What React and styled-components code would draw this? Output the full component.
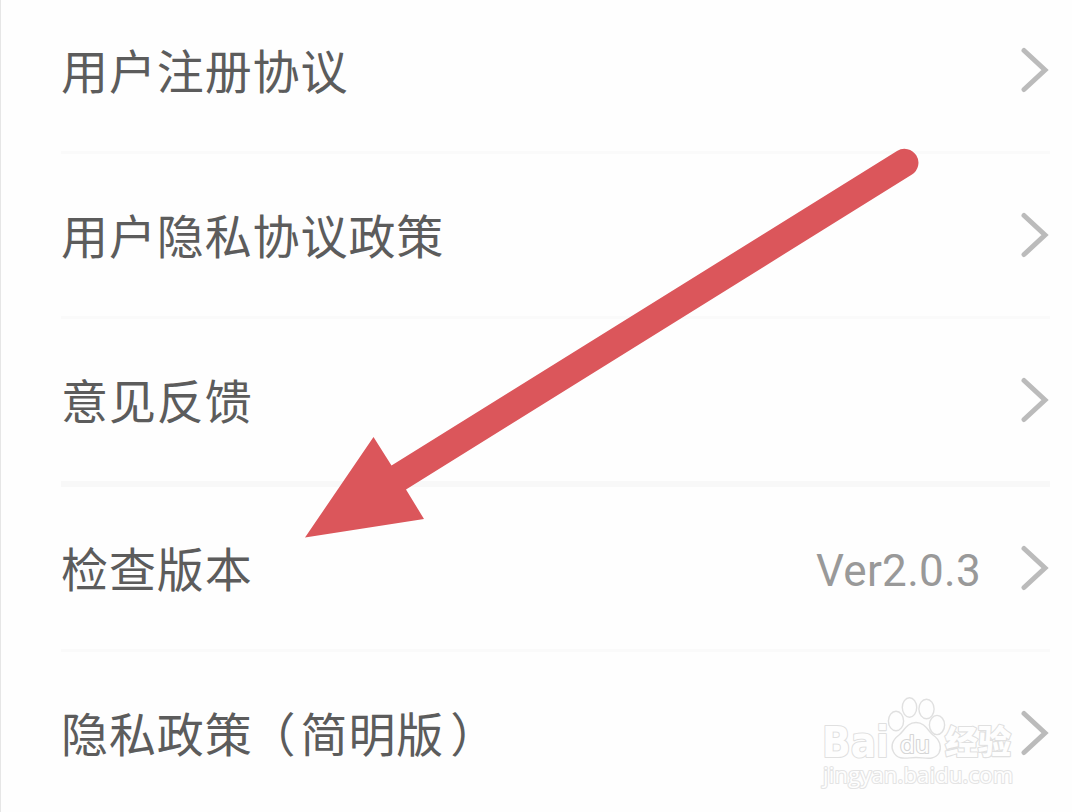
import styled, { createGlobalStyle } from "styled-components";

const ITEMS = [
  { label: "用户注册协议" },
  { label: "用户隐私协议政策" },
  { label: "意见反馈", thick: true },
  { label: "检查版本", value: "Ver2.0.3" },
  { label: "隐私政策", note: "简明版", last: true },
];

function Chevron() {
  return (
    <ChevronIcon viewBox="0 0 30 46">
      <path d="M4 3.5 L25 23 L4 42.5" />
    </ChevronIcon>
  );
}

function Arrow() {
  return (
    <ArrowOverlay viewBox="0 0 1072 812">
      <path d="M305 537.5 L373.5 437 L391.5 465.5 L897 151 A13.9 13.9 0 0 1 912 174.5 L406 489.5 L424 519 Z" />
    </ArrowOverlay>
  );
}

function Watermark() {
  return (
    <WatermarkMark viewBox="0 0 210 100">
      <BrandText x="11" y="66.5" textLength="67" lengthAdjust="spacingAndGlyphs">
        Bai
      </BrandText>
      <ellipse cx="85" cy="31" rx="7.6" ry="9.8" />
      <ellipse cx="98.5" cy="17.5" rx="7.2" ry="9.7" />
      <ellipse cx="115.5" cy="19" rx="7.6" ry="9.7" />
      <ellipse cx="126" cy="35" rx="7.6" ry="9.6" />
      <path d="M105 32.5 C96 32.5 93 41 88 45 C80 51 80 58 82.5 62 C87 71 96 67.5 105 67.5 C114 67.5 123 71 128 63 C131 57 129 50 122 45 C117 41 114 32.5 105 32.5 Z" />
      <PawText x="89" y="62.5" textLength="30" lengthAdjust="spacingAndGlyphs">
        du
      </PawText>
      <ChineseText x="134" y="64" textLength="66">
        经验
      </ChineseText>
      <SiteText x="12" y="92.5" textLength="190">
        jingyan.baidu.com
      </SiteText>
    </WatermarkMark>
  );
}

function App() {
  return (
    <Page>
      <GlobalStyle />
      <List>
        {ITEMS.map((item) => (
          <Row key={item.label} $thick={item.thick} $last={item.last}>
            <Label>
              {item.label}
              {item.note && (
                <>
                  <Paren $shift={-4}>（</Paren>
                  {item.note}
                  <Paren $shift={6}>）</Paren>
                </>
              )}
            </Label>
            {item.value && <Value>{item.value}</Value>}
            <Chevron />
          </Row>
        ))}
      </List>
      <Watermark />
      <Arrow />
    </Page>
  );
}

export default App;

const GlobalStyle = createGlobalStyle`
  * {
    box-sizing: border-box;
  }

  body {
    margin: 0;
    overflow: hidden;
    background-color: #fefefe;
  }
`;

const Page = styled.main`
  position: relative;
  width: 1072px;
  height: 812px;
  overflow: hidden;
  border-left: 1px solid #e6e6e6;
  background-color: #fefefe;
  font-family: Roboto, "Noto Sans CJK SC", sans-serif;
`;

const List = styled.ul`
  margin: -11px 22px 0 60px;
  padding: 0;
  list-style: none;
`;

const Row = styled.li`
  display: flex;
  align-items: center;
  height: ${({ $thick }) => ($thick ? 168 : 165)}px;
  border-bottom: ${({ $thick }) => ($thick ? "6px solid #f8f8f8" : "3px solid #fafafa")};
  ${({ $last }) => $last && "height: 162px; border-bottom: none;"}
`;

const Label = styled.span`
  flex: 1;
  margin-top: -3px;
  color: #5c5c5c;
  font-family: "Noto Sans CJK SC", sans-serif;
  font-size: 47px;
  line-height: 60px;
  letter-spacing: 0.9px;
  white-space: nowrap;
`;

const Paren = styled.span`
  margin-left: ${({ $shift }) => $shift}px;
  margin-right: ${({ $shift }) => -$shift}px;
`;

const Value = styled.span`
  margin-right: 39px;
  padding-top: 6px;
  color: #999;
  font-size: 44px;
  line-height: 52px;
  letter-spacing: 0.3px;
`;

const ChevronIcon = styled.svg`
  flex: none;
  width: 30px;
  height: 46px;
  fill: none;
  stroke: #bbb;
  stroke-width: 5;
  stroke-linecap: round;
`;

const ArrowOverlay = styled.svg`
  position: absolute;
  top: 0;
  left: -1px;
  width: 1072px;
  height: 812px;
  fill: #db565b;
  pointer-events: none;
`;

const WatermarkMark = styled.svg`
  position: absolute;
  top: 690px;
  left: 810px;
  width: 210px;
  height: 100px;
  fill: #fefefe;
  stroke: #e0e0e0;
  stroke-width: 1.4;
  stroke-linejoin: round;
`;

const MarkText = styled.text`
  paint-order: stroke;
  stroke-width: 2.2;
`;

const BrandText = styled(MarkText)`
  font: 700 42px "DejaVu Sans", sans-serif;
`;

const PawText = styled(MarkText)`
  font: 400 23px "DejaVu Sans", sans-serif;
  stroke: #d6d6d6;
`;

const ChineseText = styled(MarkText)`
  font: 900 33px "Noto Sans CJK SC", sans-serif;
`;

const SiteText = styled(MarkText)`
  font: 400 22px "Open Sans", sans-serif;
  stroke: #e4e4e4;
`;
